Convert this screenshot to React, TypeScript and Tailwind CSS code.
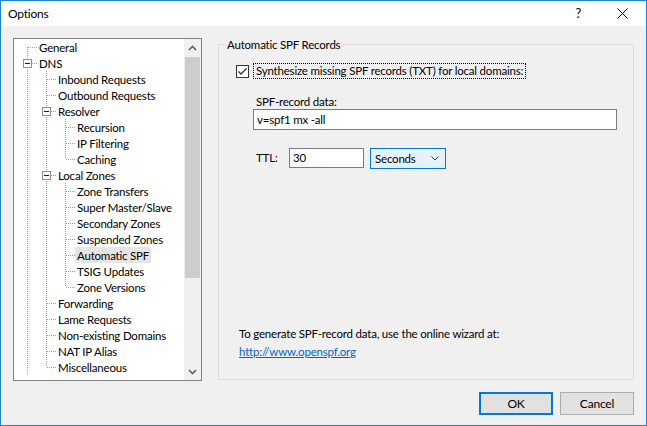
import React from 'react';

type TreeNode = { label: string; level: number; open?: boolean; selected?: boolean };

const TREE: TreeNode[] = [
  { label: 'General', level: 0 },
  { label: 'DNS', level: 0, open: true },
  { label: 'Inbound Requests', level: 1 },
  { label: 'Outbound Requests', level: 1 },
  { label: 'Resolver', level: 1, open: true },
  { label: 'Recursion', level: 2 },
  { label: 'IP Filtering', level: 2 },
  { label: 'Caching', level: 2 },
  { label: 'Local Zones', level: 1, open: true },
  { label: 'Zone Transfers', level: 2 },
  { label: 'Super Master/Slave', level: 2 },
  { label: 'Secondary Zones', level: 2 },
  { label: 'Suspended Zones', level: 2 },
  { label: 'Automatic SPF', level: 2, selected: true },
  { label: 'TSIG Updates', level: 2 },
  { label: 'Zone Versions', level: 2 },
  { label: 'Forwarding', level: 1 },
  { label: 'Lame Requests', level: 1 },
  { label: 'Non-existing Domains', level: 1 },
  { label: 'NAT IP Alias', level: 1 },
  { label: 'Miscellaneous', level: 1 },
];

// more root items sit below the visible part, so root level always continues
function hasNext(i: number): boolean {
  const lvl = TREE[i].level;
  for (let j = i + 1; j < TREE.length; j++) {
    if (TREE[j].level === lvl) return true;
    if (TREE[j].level < lvl) return false;
  }
  return lvl === 0;
}

function ancestorAt(i: number, lvl: number): number {
  for (let j = i - 1; j >= 0; j--) if (TREE[j].level === lvl) return j;
  return -1;
}

const DOT = { stroke: '#a0a0a0', strokeWidth: 1, strokeDasharray: '1 1' };

function Guide({
  up,
  down,
  across,
  box,
}: {
  up?: boolean;
  down?: boolean;
  across?: boolean;
  box?: boolean;
}) {
  return (
    <svg width="19" height="16" className="shrink-0 block">
      {up && <line x1="9.5" y1="0" x2="9.5" y2={box ? 4 : 8} {...DOT} />}
      {down && <line x1="9.5" y1={box ? 14 : 8} x2="9.5" y2="16" {...DOT} />}
      {across && <line x1={box ? 14 : 10} y1="8.5" x2="19" y2="8.5" {...DOT} />}
      {box && (
        <>
          <rect x="5.5" y="4.5" width="8" height="8" fill="#fff" stroke="#919191" />
          <line x1="7" y1="8.5" x2="12" y2="8.5" stroke="#1c1c1c" />
        </>
      )}
    </svg>
  );
}

function TreeRow({ i }: { i: number }) {
  const node = TREE[i];
  const cols = [];
  for (let k = 0; k < node.level; k++) {
    const a = ancestorAt(i, k);
    cols.push(<Guide key={k} up={hasNext(a)} down={hasNext(a)} />);
  }
  cols.push(
    <Guide key="own" up={i !== 0} down={hasNext(i)} across box={node.open} />
  );
  return (
    <div className="flex h-[16px] items-center">
      {cols}
      <span
        className={`px-[2px] h-[16px] leading-[17px] whitespace-nowrap ${
          node.selected ? 'bg-[#e5e5e5]' : ''
        }`}
      >
        {node.label}
      </span>
    </div>
  );
}

function Chevron({ dir }: { dir: 'up' | 'down' }) {
  return (
    <svg width="9" height="6" viewBox="0 0 9 6" className="block">
      <polyline
        points={dir === 'up' ? '1,5 4.5,1.5 8,5' : '1,1 4.5,4.5 8,1'}
        fill="none"
        stroke="#606060"
        strokeWidth="1.6"
      />
    </svg>
  );
}

function OptionsTree() {
  return (
    <div className="w-[189px] h-[343px] border border-[#828282] bg-white flex shrink-0">
      <div className="flex-1 pl-[4px] overflow-hidden">
        {TREE.map((_, i) => (
          <TreeRow key={i} i={i} />
        ))}
      </div>
      <div className="w-[17px] bg-[#f0f0f0] flex flex-col">
        <div className="h-[17px] flex items-center justify-center">
          <Chevron dir="up" />
        </div>
        <div className="flex-1 px-[1px] pt-[1px]">
          <div className="h-[221px] bg-[#cdcdcd]" />
        </div>
        <div className="h-[17px] flex items-center justify-center">
          <Chevron dir="down" />
        </div>
      </div>
    </div>
  );
}

function SpfGroup() {
  return (
    <div className="mt-[6px] w-[416px] h-[336px] border border-[#dcdcdc] flex flex-col">
      <div className="-mt-[8px] ml-[6px] px-[2px] w-fit bg-[#f0f0f0] leading-[16px]">
        Automatic SPF Records
      </div>

      <div className="mt-[10px] ml-[17px] flex items-center h-[16px]">
        <span className="w-[13px] h-[13px] border border-[#333] bg-white flex items-center justify-center">
          <svg width="11" height="11" viewBox="0 0 11 11">
            <polyline points="1.5,5.5 4,8 9.5,2.5" fill="none" stroke="#333" strokeWidth="1.3" />
          </svg>
        </span>
        <span className="ml-[4px] px-[2px] h-[16px] leading-[14px] border border-dotted border-black">
          Synthesize missing SPF records (TXT) for local domains:
        </span>
      </div>

      <div className="mt-[15px] ml-[37px] h-[15px] leading-[15px]">SPF-record data:</div>
      <div className="ml-[34px] w-[364px] h-[21px] border border-[#7a7a7a] bg-white pl-[3px] leading-[19px]">
        v=spf1 mx -all
      </div>

      <div className="mt-[18px] ml-[37px] flex items-start">
        <span className="w-[33px] leading-[20px]">TTL:</span>
        <div className="w-[75px] h-[20px] border border-[#7a7a7a] bg-white pl-[3px] leading-[18px]">
          30
        </div>
        <div className="ml-[6px] w-[76px] h-[21px] border border-[#0078d7] bg-[#e5f1fb] flex items-center pl-[4px] pr-[6px]">
          <span className="flex-1">Seconds</span>
          <svg width="8" height="5" viewBox="0 0 8 5">
            <polyline points="0.5,0.5 4,4 7.5,0.5" fill="none" stroke="#333" strokeWidth="1" />
          </svg>
        </div>
      </div>

      <div className="mt-auto ml-[20px] pb-[18px]">
        <div className="leading-[18px]">To generate SPF-record data, use the online wizard at:</div>
        <div className="leading-[18px] text-[#0066cc] underline">http://www.openspf.org</div>
      </div>
    </div>
  );
}

export default function App() {
  return (
    <div className="w-[647px] h-[426px] border border-[#1883d7] bg-[#f0f0f0] flex flex-col text-[11.5px] tracking-[-0.2px] text-black font-['Lato','Liberation_Sans',Arial,sans-serif]">
      <div className="h-[25px] bg-white flex items-center shrink-0">
        <span className="ml-[7px] text-[12px]">Options</span>
        <span className="ml-auto mr-[36px] text-[13px]">?</span>
        <svg width="11" height="11" viewBox="0 0 11 11" className="mr-[18px]">
          <path d="M0.5 0.5 L10.5 10.5 M10.5 0.5 L0.5 10.5" stroke="#000" strokeWidth="1" />
        </svg>
      </div>

      <div className="flex-1 flex flex-col pl-[12px] pt-[12px]">
        <div className="flex gap-[16px]">
          <OptionsTree />
          <SpfGroup />
        </div>
        <div className="mt-[11px] ml-[466px] flex gap-[7px]">
          <button className="w-[74px] h-[23px] border-2 border-[#0078d7] bg-[#e1e1e1] text-[12px]">OK</button>
          <button className="w-[74px] h-[23px] border border-[#adadad] bg-[#e1e1e1] text-[12px]">Cancel</button>
        </div>
      </div>
    </div>
  );
}
